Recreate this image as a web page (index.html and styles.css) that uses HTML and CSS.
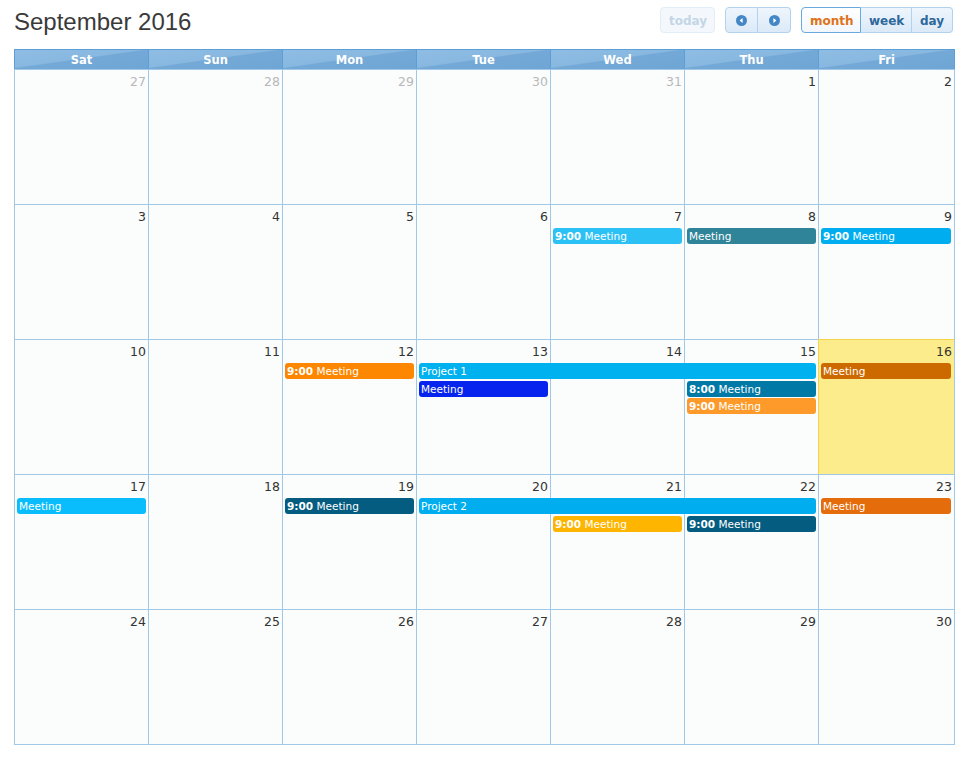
FILE: index.html
```html
<!DOCTYPE html>
<html lang="en">
<head>
<meta charset="utf-8">
<title>September 2016</title>
<link rel="stylesheet" href="styles.css">
</head>
<body>
<div class="cal">
  <div class="toolbar">
    <h2 class="title">September 2016</h2>
    <div class="tools">
      <button class="btn today">today</button>
      <div class="group">
        <button class="btn nav"><svg width="11" height="11" viewBox="0 0 11 11"><circle cx="5.5" cy="5.5" r="5.5" fill="#4487c6"/><path d="M6.6 3 L3.6 5.5 L6.6 8 Z" fill="#fff"/></svg></button>
        <button class="btn nav"><svg width="11" height="11" viewBox="0 0 11 11"><circle cx="5.5" cy="5.5" r="5.5" fill="#4487c6"/><path d="M4.4 3 L7.4 5.5 L4.4 8 Z" fill="#fff"/></svg></button>
      </div>
      <div class="group">
        <button class="btn view active">month</button>
        <button class="btn view w">week</button>
        <button class="btn view d">day</button>
      </div>
    </div>
  </div>

  <div class="grid">
    <div class="head">
      <div>Sat</div><div>Sun</div><div>Mon</div><div>Tue</div><div>Wed</div><div>Thu</div><div class="last">Fri</div>
    </div>

    <div class="week">
      <div class="day c1 other">27</div><div class="day c2 other">28</div><div class="day c3 other">29</div><div class="day c4 other">30</div><div class="day c5 other">31</div><div class="day c6">1</div><div class="day c7">2</div>
    </div>

    <div class="week">
      <div class="day c1">3</div><div class="day c2">4</div><div class="day c3">5</div><div class="day c4">6</div><div class="day c5">7</div><div class="day c6">8</div><div class="day c7">9</div>
      <div class="ev r1 e5" style="background:#2cc1f5"><b>9:00</b> Meeting</div>
      <div class="ev r1 e6" style="background:#2f8499">Meeting</div>
      <div class="ev r1 e7" style="background:#00aef0"><b>9:00</b> Meeting</div>
    </div>

    <div class="week">
      <div class="day c1">10</div><div class="day c2">11</div><div class="day c3">12</div><div class="day c4">13</div><div class="day c5">14</div><div class="day c6">15</div><div class="day c7 today-cell">16</div>
      <div class="ev r1 e3" style="background:#fd8700"><b>9:00</b> Meeting</div>
      <div class="ev r1 e4 span3" style="background:#00b1ef">Project 1</div>
      <div class="ev r2 e4" style="background:#0624ed">Meeting</div>
      <div class="ev r2 e6" style="background:#0079a6"><b>8:00</b> Meeting</div>
      <div class="ev r3 e6" style="background:#fd9a29"><b>9:00</b> Meeting</div>
      <div class="ev r1 e7" style="background:#cc6a00">Meeting</div>
    </div>

    <div class="week">
      <div class="day c1">17</div><div class="day c2">18</div><div class="day c3">19</div><div class="day c4">20</div><div class="day c5">21</div><div class="day c6">22</div><div class="day c7">23</div>
      <div class="ev r1 e1" style="background:#09bdfd">Meeting</div>
      <div class="ev r1 e3" style="background:#045c80"><b>9:00</b> Meeting</div>
      <div class="ev r1 e4 span3" style="background:#00aef0">Project 2</div>
      <div class="ev r2 e5" style="background:#fdb500"><b>9:00</b> Meeting</div>
      <div class="ev r2 e6" style="background:#045c80"><b>9:00</b> Meeting</div>
      <div class="ev r1 e7" style="background:#e56c0b">Meeting</div>
    </div>

    <div class="week lastweek">
      <div class="day c1">24</div><div class="day c2">25</div><div class="day c3">26</div><div class="day c4">27</div><div class="day c5">28</div><div class="day c6">29</div><div class="day c7">30</div>
    </div>
  </div>
</div>
</body>
</html>
```

FILE: styles.css
```css
html, body {
  margin: 0;
  padding: 0;
  background: #ffffff;
}

.cal {
  width: 941px;
  margin-left: 14px;
  font-family: "DejaVu Sans", Verdana, sans-serif;
}

.toolbar {
  display: flex;
  justify-content: space-between;
  align-items: flex-start;
  height: 49px;
}

.title {
  margin: 0;
  padding-top: 8px;
  font-family: "Liberation Sans", Arial, sans-serif;
  font-weight: normal;
  font-size: 24px;
  line-height: 28px;
  color: #3a3a3a;
}

.tools {
  display: flex;
  align-items: flex-start;
  padding-top: 7px;
  margin-right: 2px;
}

.group {
  display: flex;
  margin-left: 10px;
}

.btn {
  box-sizing: border-box;
  height: 26px;
  margin: 0;
  padding: 2px 8px 0;
  font-family: "DejaVu Sans", Verdana, sans-serif;
  font-weight: bold;
  font-size: 12px;
  line-height: 22px;
  color: #2d679b;
  border: 1px solid #b3d2ee;
  background: linear-gradient(#eef5fc, #dbeaf8);
  cursor: pointer;
}

.today {
  width: 55px;
  border-radius: 4px;
  border-color: #e2edf7;
  background: #f4f8fc;
  color: #c3d6e7;
}

.nav {
  width: 33px;
  padding: 0;
  display: flex;
  align-items: center;
  justify-content: center;
}

.group .btn:first-child {
  border-radius: 4px 0 0 4px;
}

.group .btn:last-child {
  border-radius: 0 4px 4px 0;
  border-left: none;
}

.view.active {
  width: 60px;
  color: #e0731a;
  border-color: #6aa9de;
  background: linear-gradient(#ffffff, #f1f7fd);
}

.view.w {
  width: 51px;
  border-left: none;
}

.view.d {
  width: 41px;
}

.grid {
  width: 941px;
}

.head {
  display: grid;
  grid-template-columns: repeat(6, 134px) 137px;
  height: 20px;
}

.head div {
  box-sizing: border-box;
  border-top: 1px solid #5b9fd8;
  border-left: 1px solid #5b9fd8;
  background: linear-gradient(172deg, #8fbce3 0%, #88b8e0 45%, #74a9d7 48%, #6ea5d4 100%);
  color: #ffffff;
  font-weight: bold;
  font-size: 11.5px;
  line-height: 19px;
  padding-top: 1px;
  text-align: center;
}

.head div.last {
  border-right: 1px solid #5b9fd8;
}

.week {
  display: grid;
  grid-template-columns: repeat(6, 134px) 137px;
  grid-template-rows: 24px 17.5px 17.5px 17.5px 1fr;
  height: 135px;
}

.lastweek {
  height: 136px;
}

.day {
  grid-row: 1 / -1;
  box-sizing: border-box;
  border-top: 1px solid #a2c8e8;
  border-left: 1px solid #a2c8e8;
  background: #fbfdfd;
  padding: 4px 2px 0 0;
  text-align: right;
  font-size: 12.5px;
  line-height: 15px;
  color: #333333;
}

.lastweek .day {
  border-bottom: 1px solid #a2c8e8;
}

.day.c7 {
  border-right: 1px solid #a2c8e8;
}

.day.other {
  color: #b8b8b8;
}

.day.today-cell {
  background: #fcec8c;
  border-top-color: #f3d34a;
  border-left-color: #f3d34a;
}

.c1 { grid-column: 1; }
.c2 { grid-column: 2; }
.c3 { grid-column: 3; }
.c4 { grid-column: 4; }
.c5 { grid-column: 5; }
.c6 { grid-column: 6; }
.c7 { grid-column: 7; }

.e1 { grid-column: 1; }
.e3 { grid-column: 3; }
.e4 { grid-column: 4; }
.e5 { grid-column: 5; }
.e6 { grid-column: 6; }
.e7 { grid-column: 7; }
.e4.span3 { grid-column: 4 / span 3; }

.r1 { grid-row: 2; }
.r2 { grid-row: 3; }
.r3 { grid-row: 4; }

.ev {
  height: 16px;
  margin: 0 2px 0 3px;
  padding: 0 2px;
  border-radius: 3px;
  color: #ffffff;
  font-size: 10.5px;
  line-height: 16px;
  white-space: nowrap;
  overflow: hidden;
}

.ev.e7 {
  margin-right: 4px;
}

.ev b {
  font-weight: bold;
}
```
